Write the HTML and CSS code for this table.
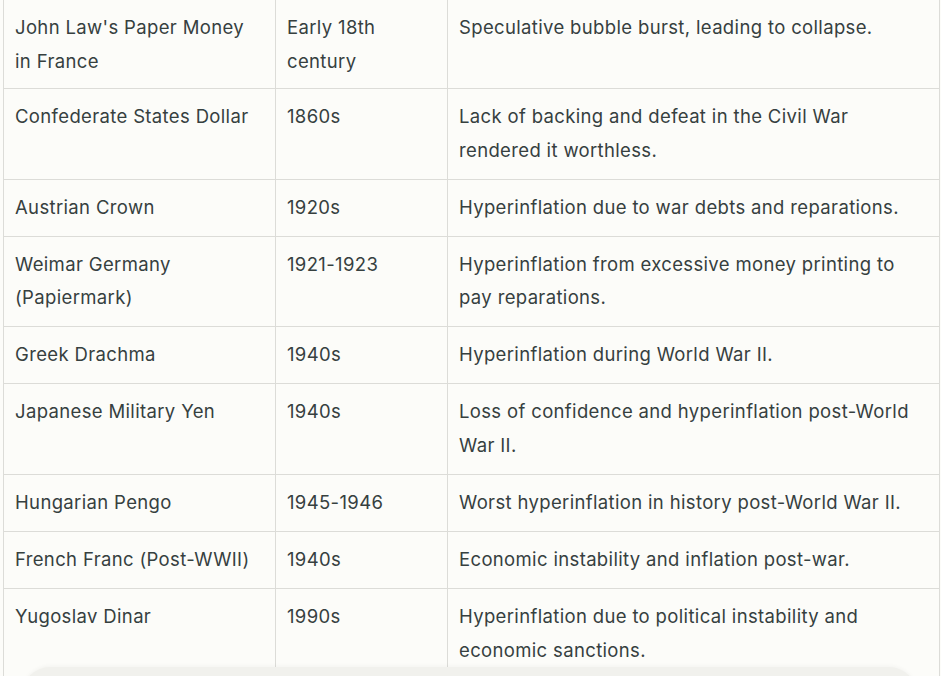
FILE: index.html
```html
<!DOCTYPE html>
<html lang="en">
<head>
<meta charset="utf-8">
<link rel="stylesheet" href="styles.css">
</head>
<body>
<div class="page">
  <table class="money">
    <colgroup>
      <col class="c1"><col class="c2"><col class="c3">
    </colgroup>
    <tbody>
      <tr><td>John Law's Paper Money in France</td><td>Early 18th century</td><td>Speculative bubble burst, leading to collapse.</td></tr>
      <tr><td>Confederate States Dollar</td><td>1860s</td><td>Lack of backing and defeat in the Civil War rendered it worthless.</td></tr>
      <tr><td>Austrian Crown</td><td>1920s</td><td>Hyperinflation due to war debts and reparations.</td></tr>
      <tr><td>Weimar Germany (Papiermark)</td><td>1921-1923</td><td>Hyperinflation from excessive money printing to pay reparations.</td></tr>
      <tr><td>Greek Drachma</td><td>1940s</td><td>Hyperinflation during World War II.</td></tr>
      <tr><td>Japanese Military Yen</td><td>1940s</td><td>Loss of confidence and hyperinflation post-World War II.</td></tr>
      <tr><td>Hungarian Pengo</td><td>1945-1946</td><td>Worst hyperinflation in history post-World War II.</td></tr>
      <tr><td>French Franc (Post-WWII)</td><td>1940s</td><td>Economic instability and inflation post-war.</td></tr>
      <tr><td>Yugoslav Dinar</td><td>1990s</td><td>Hyperinflation due to political instability and economic sanctions.</td></tr>
      <tr><td>Zimbabwean Dollar</td><td>2000s</td><td>Hyperinflation from economic mismanagement.</td></tr>
    </tbody>
  </table>
  <div class="composer"></div>
</div>
</body>
</html>
```

FILE: styles.css
```css
html, body {
  margin: 0;
  padding: 0;
  background: #fcfcf9;
  overflow: hidden;
  height: 676px;
}
.page {
  position: relative;
  height: 676px;
  overflow: hidden;
  padding-left: 3px;
}
.money {
  border-collapse: collapse;
  table-layout: fixed;
  width: 936px;
  font-family: "Inter", "Liberation Sans", sans-serif;
  font-size: 18.5px;
  letter-spacing: 0.35px;
  line-height: 33.75px;
  color: #36403f;
  margin-top: -2px;
}
.c1 { width: 272px; }
.c2 { width: 172px; }
.c3 { width: 492px; }
.money td {
  border: 1px solid #dcdcd8;
  padding: 11.1px 12px 11.1px 11px;
  vertical-align: top;
}
.money tr:first-child td {
  padding-top: 12px;
  padding-bottom: 9.5px;
}
.composer {
  position: absolute;
  left: 22px;
  right: 24px;
  top: 667px;
  height: 80px;
  background: #f1f1ed;
  border-radius: 28px;
  box-shadow: 0 -1px 4px rgba(0,0,0,0.04);
}
```
